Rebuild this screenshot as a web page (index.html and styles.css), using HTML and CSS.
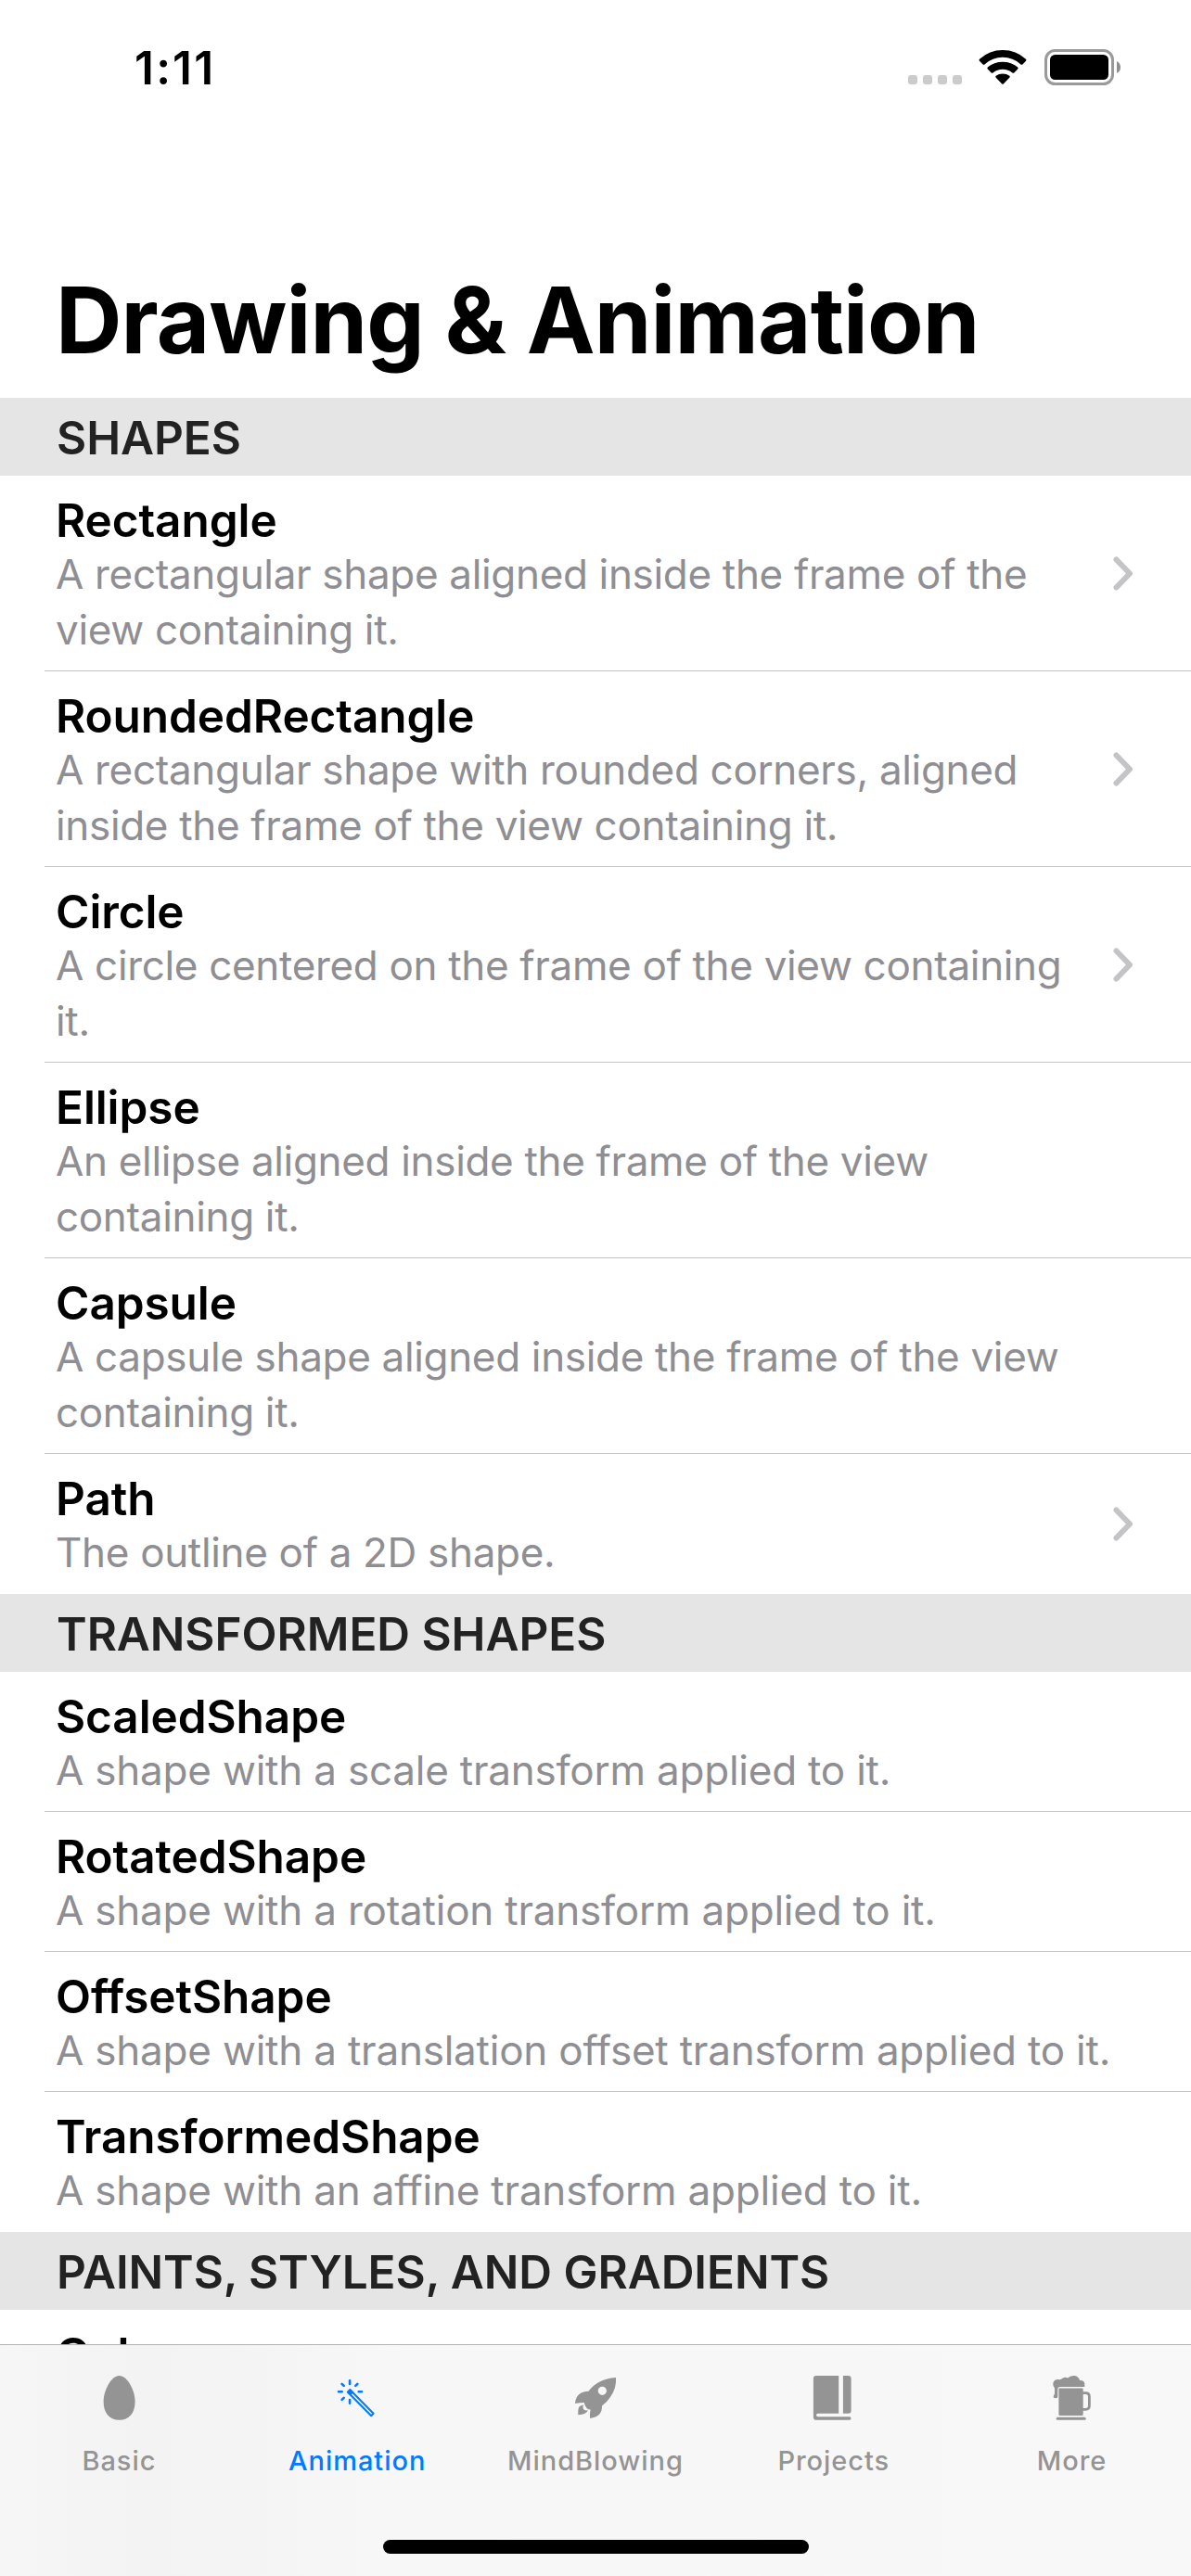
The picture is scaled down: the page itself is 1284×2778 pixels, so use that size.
FILE: index.html
```html
<!DOCTYPE html>
<html lang="en">
<head>
<meta charset="utf-8">
<title>Drawing &amp; Animation</title>
<link rel="stylesheet" href="styles.css">
</head>
<body>
<div class="screen">
  <header class="status-bar">
    <span class="clock">1:11</span>
    <div class="indicators">
      <svg class="signal" width="58" height="60" viewBox="0 0 58 60" fill="#cbcbcb">
        <rect x="0" y="38" width="10" height="10" rx="3"/>
        <rect x="16" y="38" width="10" height="10" rx="3"/>
        <rect x="32" y="38" width="10" height="10" rx="3"/>
        <rect x="48" y="38" width="10" height="10" rx="3"/>
      </svg>
      <svg class="wifi" width="52" height="60" viewBox="0 0 52 60">
        <path d="M1 20.7Q0 21.7 1 22.7L4.6 26.4Q5.5 27.3 6.5 26.4Q15 18.8 26 18.8T45.500 26.400Q46.500 27.300 47.400 26.400L51 22.700Q52 21.700 51 20.700Q40.500 11 26 11T1 20.700Z"/>
        <path d="M9.800 29.600Q8.800 30.600 9.800 31.600L13.700 35.400Q14.600 36.300 15.600 35.400Q20 31.700 26 31.700T36.400 35.400Q37.400 36.300 38.300 35.400L42.200 31.600Q43.200 30.600 42.200 29.600Q35.400 23.700 26 23.700T9.800 29.600Z"/>
        <path d="M18.700 38.700Q17.700 39.700 18.700 40.700L25 47.200Q26 48.200 27 47.200L33.300 40.700Q34.300 39.700 33.300 38.700Q30.200 36.500 26 36.500T18.700 38.700Z"/>
      </svg>
      <svg class="battery" width="84" height="60" viewBox="0 0 84 60">
        <rect x="1.500" y="11.500" width="72" height="36" rx="10" fill="none" stroke="#9a9a9a" stroke-width="3"/>
        <rect x="6" y="16" width="63" height="27" rx="5.500"/>
        <path d="M78 23Q82 25 82 29.500T78 36Z" fill="#8f8f8f"/>
      </svg>
    </div>
  </header>

  <h1 class="large-title">Drawing &amp; Animation</h1>

  <main class="list">
    <h2 class="section">Shapes</h2>
    <ul class="rows">
      <li class="row">
        <div class="text"><h3>Rectangle</h3><p>A rectangular shape aligned inside the frame of the<br>view containing it.</p></div>
        <svg class="chevron" width="22" height="37" viewBox="0 0 22 37"><path d="M3.500 3.500L18 18.500L3.500 33.500"/></svg>
      </li>
      <li class="row">
        <div class="text"><h3>RoundedRectangle</h3><p>A rectangular shape with rounded corners, aligned<br>inside the frame of the view containing it.</p></div>
        <svg class="chevron" width="22" height="37" viewBox="0 0 22 37"><path d="M3.500 3.500L18 18.500L3.500 33.500"/></svg>
      </li>
      <li class="row">
        <div class="text"><h3>Circle</h3><p>A circle centered on the frame of the view containing<br>it.</p></div>
        <svg class="chevron" width="22" height="37" viewBox="0 0 22 37"><path d="M3.500 3.500L18 18.500L3.500 33.500"/></svg>
      </li>
      <li class="row">
        <div class="text"><h3>Ellipse</h3><p>An ellipse aligned inside the frame of the view<br>containing it.</p></div>
      </li>
      <li class="row">
        <div class="text"><h3>Capsule</h3><p>A capsule shape aligned inside the frame of the view<br>containing it.</p></div>
      </li>
      <li class="row">
        <div class="text"><h3>Path</h3><p>The outline of a 2D shape.</p></div>
        <svg class="chevron" width="22" height="37" viewBox="0 0 22 37"><path d="M3.500 3.500L18 18.500L3.500 33.500"/></svg>
      </li>
    </ul>

    <h2 class="section">Transformed Shapes</h2>
    <ul class="rows loose">
      <li class="row"><div class="text"><h3>ScaledShape</h3><p>A shape with a scale transform applied to it.</p></div></li>
      <li class="row"><div class="text"><h3>RotatedShape</h3><p>A shape with a rotation transform applied to it.</p></div></li>
      <li class="row"><div class="text"><h3>OffsetShape</h3><p>A shape with a translation offset transform applied to it.</p></div></li>
      <li class="row"><div class="text"><h3>TransformedShape</h3><p>A shape with an affine transform applied to it.</p></div></li>
    </ul>

    <h2 class="section">Paints, Styles, and Gradients</h2>
    <ul class="rows">
      <li class="row"><div class="text"><h3>Color</h3></div></li>
    </ul>
  </main>

  <footer class="tab-bar">
    <nav class="tabs">
      <a class="tab">
        <svg width="60" height="60" viewBox="0 0 60 60"><path d="M30.600 6C39 6 47.600 21.500 47.600 34C47.600 46.500 41 53.800 30.600 53.800S13.600 46.500 13.600 34C13.600 21.500 22.200 6 30.600 6Z"/></svg>
        <span>Basic</span>
      </a>
      <a class="tab active">
        <svg width="60" height="60" viewBox="0 0 60 60">
          <g fill="none" stroke="currentColor" stroke-width="2.600" stroke-linecap="round">
            <path d="M22.100 11.300V15M22.100 32V35.700M10 23.300H13.700M31.700 23.300H35M13.600 14.800L15.700 16.900M30.400 14.800L28.300 16.900M13.600 31.900L15.700 29.800"/>
            <path stroke-width="2" stroke-linejoin="round" d="M20 23.700L22.500 21.200L47.600 46.800L45.200 49.200Z"/>
          </g>
          <path d="M22.300 19.800L26.300 23.800L22.700 27.500L18.700 23.500Z"/>
        </svg>
        <span>Animation</span>
      </a>
      <a class="tab">
        <svg width="60" height="60" viewBox="0 0 60 60">
          <path fill-rule="evenodd" d="M52 8Q53 19 46 29Q42 35 37 38.500Q37.500 50 24 52Q23.500 47 24.700 42.300Q22.500 43 20.500 41Q18.500 38.800 17.700 35Q13 35 8 36Q9 23 22.500 22.800Q32 9.500 52 8ZM37.300 17.700A4.600 4.600 0 1 0 37.300 26.900A4.600 4.600 0 1 0 37.300 17.700Z"/>
          <path d="M17 37.600Q15.800 41.200 17.700 42.800Q19.500 44.200 22 43Q20.500 48 11.300 48.200Q11 42 12.300 39.800Q13.800 37.800 17 37.600Z"/>
        </svg>
        <span>MindBlowing</span>
      </a>
      <a class="tab">
        <svg width="60" height="60" viewBox="0 0 60 60">
          <path d="M11 6H35.200V46.800H13Q11 47 11 48.600T13 50.200H47Q48.500 50.500 48.500 52T47 53.800H11Q7.900 53.800 7.900 50.700V9.100Q7.900 6 11 6ZM39.900 6H45.600Q48.600 6 48.600 9V43.800Q48.600 46.800 45.600 46.800H39.900Z"/>
        </svg>
        <span>Projects</span>
      </a>
      <a class="tab">
        <svg width="60" height="60" viewBox="0 0 60 60">
          <path d="M11 30Q9.200 30 9.700 28L11 25.500V19.500Q9 17.500 9.300 14Q10.500 9.500 16 10.200Q17.500 10.200 18.500 9.500Q21.500 6.800 25 8.500Q28 5.500 32.500 6Q37 6.800 38 11Q43 10.800 43.300 14.500V18H17Q14.300 18 14.300 21V28.500Q14.300 30.200 12.500 30.200Z"/>
          <path d="M16.700 19.500H40.400Q41.700 19.500 41.700 20.800V47.700Q41.700 49 40.400 49H16.700Q15.400 49 15.400 47.700V20.800Q15.400 19.500 16.700 19.500Z"/>
          <path d="M41 24.700H44.500Q48.400 24.700 48.400 28.700V38.300Q48.400 42.300 44.500 42.300H41" fill="none" stroke="currentColor" stroke-width="2.800"/>
          <rect x="12.700" y="50.800" width="32" height="3" rx="1.500"/>
        </svg>
        <span>More</span>
      </a>
    </nav>
    <div class="home-indicator"></div>
  </footer>
</div>
</body>
</html>
```
FILE: styles.css
```css
* { box-sizing: border-box; margin: 0; padding: 0; }

body {
  background: #fff;
  color: #000;
  font-family: Inter, "Liberation Sans", sans-serif;
}

svg { display: block; flex: none; }

.screen {
  display: flex;
  flex-direction: column;
  width: 1284px;
  height: 2778px;
  overflow: hidden;
}

/* Status bar */
.status-bar {
  display: flex;
  flex: none;
  justify-content: space-between;
  height: 285px;
  padding: 43px 74px 0 145px;
}

.clock {
  font-size: 49.5px;
  font-weight: 600;
  line-height: 60px;
  letter-spacing: 2.2px;
}

.indicators { display: flex; height: 60px; }
.wifi { margin-left: 18px; }
.battery { margin-left: 19px; }

.large-title {
  flex: none;
  height: 144px;
  padding-left: 60px;
  font-size: 99px;
  font-weight: 700;
  line-height: 120px;
  letter-spacing: -0.87px;
}

/* List */
.list { flex: 1; min-height: 0; overflow: hidden; }

.section {
  height: 84px;
  padding-left: 61px;
  background: #e5e5e5;
  color: #222;
  font-size: 49.5px;
  font-weight: 600;
  line-height: 86px;
  letter-spacing: -0.05px;
  text-transform: uppercase;
}

.rows { list-style: none; }

.row {
  display: flex;
  align-items: center;
  justify-content: space-between;
  padding: 20px 62px 15px 60px;
  background: linear-gradient(#c6c6c8, #c6c6c8) no-repeat 48px 100% / 100% 1px;
}

.row:last-child { background: none; }

.row h3 {
  font-size: 49.5px;
  font-weight: 600;
  line-height: 56px;
  letter-spacing: -0.09px;
}

.row p {
  color: #8e8e93;
  font-size: 44px;
  line-height: 60px;
  letter-spacing: -0.33px;
  white-space: nowrap;
}

.loose p { letter-spacing: -0.22px; }

.chevron {
  margin-bottom: 5px;
  fill: none;
  stroke: #c4c4c6;
  stroke-width: 6;
  stroke-linecap: round;
  stroke-linejoin: round;
}

/* Tab bar */
.tab-bar {
  display: flex;
  flex: none;
  flex-direction: column;
  align-items: center;
  height: 250px;
  border-top: 1px solid #b2b2b2;
  background: linear-gradient(90deg, #f6f6f6, #f3f3f3 12%, #f4f4f4 20%, #f7f7f7 32%, #f8f8f8);
}

.tabs { display: flex; width: 100%; height: 210px; padding-top: 27px; }

.tab {
  display: flex;
  flex: 1 1 0;
  flex-direction: column;
  align-items: center;
  gap: 20px;
  color: #949494;
  font-size: 29px;
  font-weight: 500;
  line-height: 36px;
  letter-spacing: 0.95px;
}

.tab svg { fill: currentColor; }
.tab.active { color: #007aff; }

.home-indicator {
  width: 459px;
  height: 15px;
  border-radius: 7.5px;
  background: #000;
}
```
